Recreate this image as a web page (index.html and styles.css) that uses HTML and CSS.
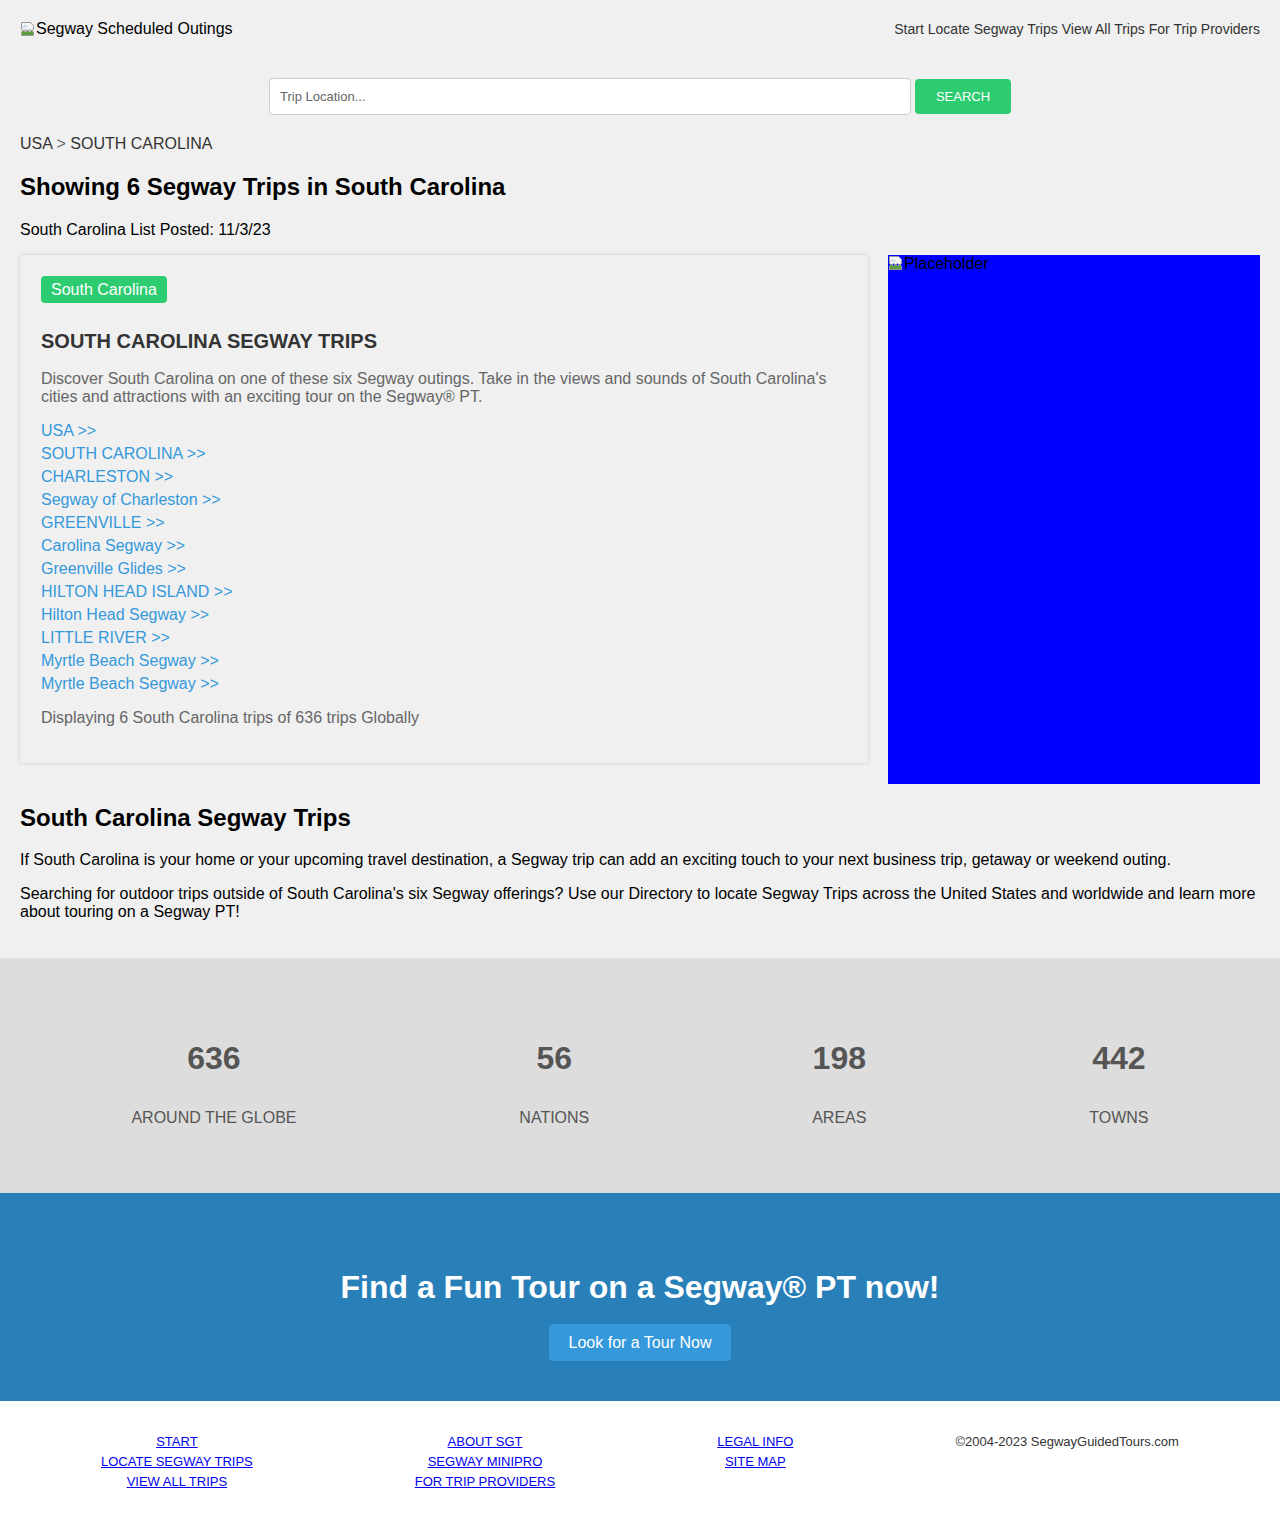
FILE: index.html
```html
<!DOCTYPE html>
<html lang="en">
<head>
<meta charset="utf-8">
<title>South Carolina Segway Trips</title>
<link rel="stylesheet" href="styles.css">
</head>
<body>
<header class="site-header">
  <a class="logo" href="#"><svg class="broken" width="16" height="16" viewBox="0 0 16 16"><path d="M1.5 1.5h9l3 3v4l-2 1.5-2-1.5-2 1.5-2-1.5-2 1.5-2-1.5z" fill="#f4f4f4" stroke="#9a9a9a"/><path d="M1.5 11l2-1.5 2 1.5 2-1.5 2 1.5 2-1.5 2 1.5v3.5h-12z" fill="#5a9e3a" stroke="#9a9a9a"/><path d="M3 6.5c1-2 3-2 4 0" fill="none" stroke="#8fb8e0"/></svg>Segway Scheduled Outings</a>
  <nav class="top-nav">
    <a href="#">Start</a>
    <a href="#">Locate Segway Trips</a>
    <a href="#">View All Trips</a>
    <a href="#">For Trip Providers</a>
  </nav>
</header>

<form class="search">
  <input class="search-input" type="text" placeholder="Trip Location...">
  <button class="search-btn" type="button">SEARCH</button>
</form>

<main class="content">
  <div class="crumbs"><a href="#">USA</a> <span class="sep">&gt;</span> <a href="#">SOUTH CAROLINA</a></div>
  <h1 class="title">Showing 6 Segway Trips in South Carolina</h1>
  <p class="posted">South Carolina List Posted: 11/3/23</p>

  <div class="layout">
    <section class="card">
      <span class="badge">South Carolina</span>
      <h2 class="card-title">SOUTH CAROLINA SEGWAY TRIPS</h2>
      <p class="card-text">Discover South Carolina on one of these six Segway outings. Take in the views and sounds of South Carolina's cities and attractions with an exciting tour on the Segway® PT.</p>
      <ul class="links">
        <li><a href="#">USA &gt;&gt;</a></li>
        <li><a href="#">SOUTH CAROLINA &gt;&gt;</a></li>
        <li><a href="#">CHARLESTON &gt;&gt;</a></li>
        <li><a href="#">Segway of Charleston &gt;&gt;</a></li>
        <li><a href="#">GREENVILLE &gt;&gt;</a></li>
        <li><a href="#">Carolina Segway &gt;&gt;</a></li>
        <li><a href="#">Greenville Glides &gt;&gt;</a></li>
        <li><a href="#">HILTON HEAD ISLAND &gt;&gt;</a></li>
        <li><a href="#">Hilton Head Segway &gt;&gt;</a></li>
        <li><a href="#">LITTLE RIVER &gt;&gt;</a></li>
        <li><a href="#">Myrtle Beach Segway &gt;&gt;</a></li>
        <li><a href="#">Myrtle Beach Segway &gt;&gt;</a></li>
      </ul>
      <p class="card-text count">Displaying 6 South Carolina trips of 636 trips Globally</p>
    </section>
    <aside class="placeholder"><svg class="broken" width="16" height="16" viewBox="0 0 16 16"><path d="M1.5 1.5h9l3 3v4l-2 1.5-2-1.5-2 1.5-2-1.5-2 1.5-2-1.5z" fill="#f4f4f4" stroke="#9a9a9a"/><path d="M1.5 11l2-1.5 2 1.5 2-1.5 2 1.5 2-1.5 2 1.5v3.5h-12z" fill="#5a9e3a" stroke="#9a9a9a"/><path d="M3 6.5c1-2 3-2 4 0" fill="none" stroke="#8fb8e0"/></svg>Placeholder</aside>
  </div>

  <h2 class="sub">South Carolina Segway Trips</h2>
  <p class="body-text first">If South Carolina is your home or your upcoming travel destination, a Segway trip can add an exciting touch to your next business trip, getaway or weekend outing.</p>
  <p class="body-text">Searching for outdoor trips outside of South Carolina's six Segway offerings? Use our Directory to locate Segway Trips across the United States and worldwide and learn more about touring on a Segway PT!</p>
</main>

<section class="stats">
  <div class="stat"><div class="num">636</div><div class="label">AROUND THE GLOBE</div></div>
  <div class="stat"><div class="num">56</div><div class="label">NATIONS</div></div>
  <div class="stat"><div class="num">198</div><div class="label">AREAS</div></div>
  <div class="stat"><div class="num">442</div><div class="label">TOWNS</div></div>
</section>

<section class="cta">
  <h2 class="cta-title">Find a Fun Tour on a Segway® PT now!</h2>
  <a class="cta-btn" href="#">Look for a Tour Now</a>
</section>

<footer class="footer">
  <div class="fcol"><a href="#">START</a><a href="#">LOCATE SEGWAY TRIPS</a><a href="#">VIEW ALL TRIPS</a></div>
  <div class="fcol"><a href="#">ABOUT SGT</a><a href="#">SEGWAY MINIPRO</a><a href="#">FOR TRIP PROVIDERS</a></div>
  <div class="fcol"><a href="#">LEGAL INFO</a><a href="#">SITE MAP</a></div>
  <div class="fcol copy">©2004-2023 SegwayGuidedTours.com</div>
</footer>
</body>
</html>
```

FILE: styles.css
```css
* { box-sizing: border-box; }
html, body { margin: 0; padding: 0; }
body {
  background: #f0f0f0;
  font-family: "Liberation Sans", Arial, sans-serif;
  color: #000;
  font-size: 16px;
}

.site-header {
  display: flex;
  justify-content: space-between;
  align-items: center;
  padding: 20px 20px 19px;
  height: 57px;
}
.logo {
  color: #000;
  text-decoration: none;
  font-size: 16px;
  display: flex;
  align-items: center;
}
.broken { display: inline-block; flex: none; }
.top-nav { display: flex; gap: 4px; font-size: 14px; }
.top-nav a { color: #333; text-decoration: none; }

.search {
  display: flex;
  justify-content: center;
  align-items: center;
  gap: 4px;
  margin-top: 21px;
}
.search-input {
  width: 642px;
  height: 37px;
  border: 1px solid #ccc;
  border-radius: 4px;
  background: #fff;
  padding: 0 10px;
  font-family: "Liberation Sans", Arial, sans-serif;
  font-size: 13px;
  color: #333;
}
.search-input::placeholder { color: #666; }
.search-btn {
  width: 96px;
  height: 35px;
  border: 0;
  border-radius: 4px;
  background: #2ecc71;
  color: #fff;
  font-family: "Liberation Sans", Arial, sans-serif;
  font-size: 13px;
}

.content { padding: 0 20px; }
.crumbs {
  margin-top: 20px;
  line-height: 18px;
  color: #333;
}
.crumbs a { color: #333; text-decoration: none; }
.crumbs .sep { color: #666; }
.title {
  margin: 20px 0 0;
  font-size: 24px;
  line-height: 28px;
}
.posted { margin: 20px 0 0; line-height: 18px; }

.layout {
  display: grid;
  grid-template-columns: 1fr 372px;
  gap: 20px;
  align-items: start;
  margin-top: 16px;
}
.card {
  background: #f0f0f0;
  box-shadow: 0 0 4px rgba(0,0,0,0.15);
  padding: 21px 21px 21px;
}
.badge {
  display: inline-block;
  background: #2ecc71;
  color: #fff;
  border-radius: 4px;
  padding: 4px 10px;
  line-height: 19px;
  font-size: 16px;
}
.card-title {
  margin: 27px 0 0;
  font-size: 20px;
  line-height: 23px;
  color: #333;
}
.card-text {
  margin: 17px 0 0;
  color: #666;
  line-height: 18px;
}
.links {
  list-style: none;
  margin: 13px 0 0;
  padding: 0;
}
.links li { line-height: 23px; }
.links a { color: #3498db; text-decoration: none; }
.count { margin: 14px 0 15px; }
.placeholder {
  background: #00f;
  height: 529px;
  color: #000;
  line-height: 18px;
  display: flex;
  align-items: flex-start;
}

.sub {
  margin: 20px 0 0;
  font-size: 24px;
  line-height: 28px;
}
.body-text { margin: 16px 0 0; line-height: 18px; }
.body-text.first { margin-top: 19px; }

.stats {
  margin-top: 37px;
  background: #ddd;
  display: flex;
  justify-content: space-around;
  padding: 82px 20px 66px;
  color: #555;
}
.stat { text-align: center; }
.num { font-size: 32px; font-weight: bold; line-height: 37px; }
.label { margin-top: 32px; line-height: 18px; }

.cta {
  background: #2980b9;
  text-align: center;
  padding: 76px 20px 40px;
}
.cta-title {
  margin: 0;
  color: #fff;
  font-size: 32px;
  line-height: 37px;
}
.cta-btn {
  display: inline-block;
  margin-top: 18px;
  background: #3498db;
  color: #fff;
  text-decoration: none;
  border-radius: 4px;
  width: 182px;
  line-height: 37px;
  font-size: 16px;
}

.footer {
  background: #fff;
  display: flex;
  justify-content: space-around;
  padding: 31px 20px 35px;
  font-size: 13px;
  line-height: 20px;
}
.fcol { display: flex; flex-direction: column; align-items: center; }
.fcol a { color: #00e; text-decoration: underline; }
.copy { color: #333; }
```
